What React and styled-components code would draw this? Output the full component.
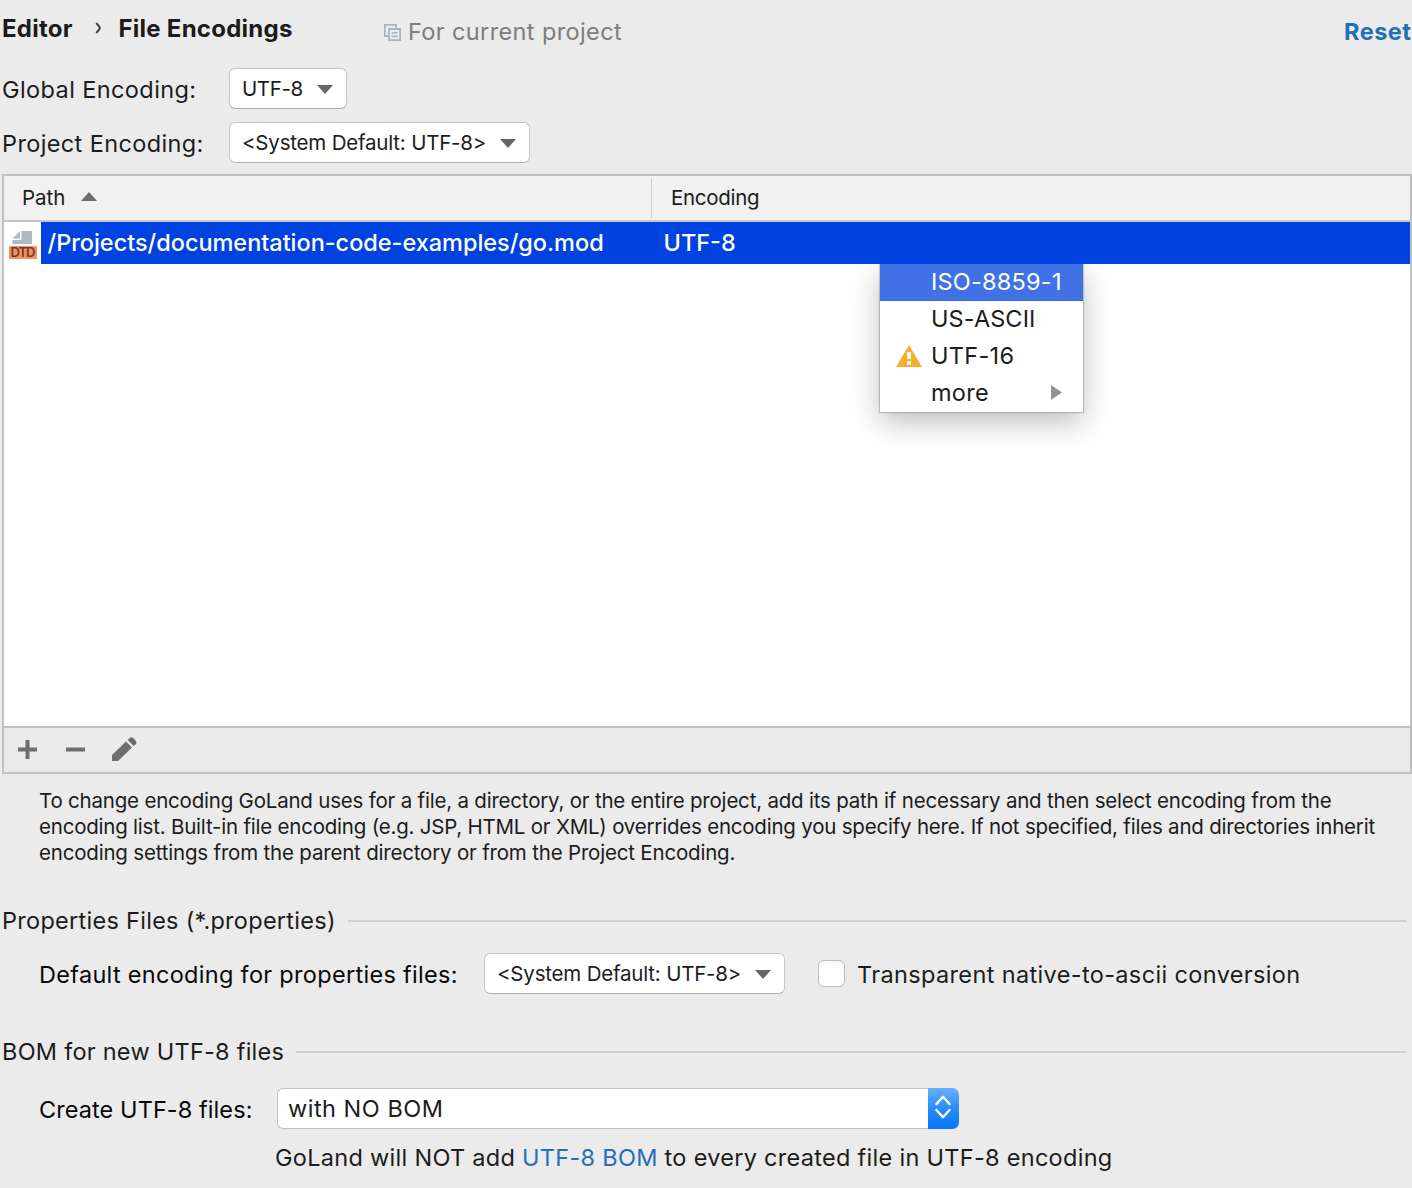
import React from "react";
import styled, { createGlobalStyle } from "styled-components";

const Global = createGlobalStyle`
  * { box-sizing: border-box; }
  body { margin: 0; background: #ebebeb; font-family: Inter, "Liberation Sans", sans-serif; }
`;

const Page = styled.main`
  width: 1412px;
  height: 1188px;
  overflow: hidden;
  display: flex;
  flex-direction: column;
  background: #ebebeb;
`;

const Text = styled.span`
  font-size: ${(p) => p.$size || 23.5}px;
  font-weight: ${(p) => p.$weight || 400};
  letter-spacing: ${(p) => p.$track || 0}px;
  color: ${(p) => p.$color || "#1c1c1c"};
  line-height: 30px;
  white-space: nowrap;
`;

const Header = styled.header`
  display: flex;
  align-items: flex-start;
  height: 68px;
  padding: 14px 0 0 2px;
`;

const Crumb = styled.div`
  display: flex;
  align-items: center;
  width: ${(p) => p.$w}px;
`;

const Scope = styled.div`
  display: flex;
  align-items: center;
  padding-top: 3px;
  gap: 7px;
  flex: 1;
`;

const ResetLink = styled.a`
  display: flex;
  padding-top: 3px;
  width: 68px;
`;

const FormRow = styled.div`
  display: flex;
  align-items: center;
  height: 41px;
  margin-bottom: ${(p) => p.$after || 0}px;
  padding-left: ${(p) => p.$left || 2}px;
`;

const Label = styled.label`
  display: flex;
  width: ${(p) => p.$w}px;
  padding-top: 2px;
`;

const Select = styled.button`
  display: flex;
  align-items: center;
  justify-content: space-between;
  width: ${(p) => p.$w}px;
  height: 41px;
  padding: 1px 13px 0 12px;
  font-family: inherit;
  background: #fff;
  border: 1px solid #c6c6c6;
  border-bottom-color: #b0b0b0;
  border-radius: 6px;
`;

const Table = styled.section`
  display: flex;
  flex-direction: column;
  height: 600px;
  margin: 11px 0 0 2px;
  border: 2px solid #c1c1c1;
  background: #fff;
`;

const TableHead = styled.div`
  display: flex;
  align-items: center;
  height: 46px;
  background: #f1f1f1;
  border-bottom: 2px solid #c6c6c6;
`;

const PathHead = styled.div`
  display: flex;
  align-items: center;
  gap: 16px;
  width: 648px;
  height: 40px;
  padding-left: 18px;
  border-right: 1px solid #cfcfcf;

  svg {
    margin-bottom: 3px;
  }
`;

const EncodingHead = styled.div`
  padding-left: 19px;
`;

const TableBody = styled.div`
  position: relative;
  flex: 1;
`;

const Row = styled.div`
  display: flex;
  height: 42px;
`;

const IconCell = styled.div`
  width: 37px;
  padding: 9px 0 0 5px;
`;

const PathCell = styled.div`
  display: flex;
  align-items: center;
  width: 611px;
  padding-left: 6.5px;
  background: #0042df;
`;

const EncodingCell = styled.div`
  display: flex;
  align-items: center;
  flex: 1;
  padding-left: 11.5px;
  background: #0042df;
`;

const Menu = styled.div`
  position: absolute;
  left: 876px;
  top: 42px;
  width: 203px;
  background: #fff;
  box-shadow: 0 0 1px 1px rgba(0, 0, 0, 0.18), 0 10px 28px rgba(0, 0, 0, 0.26);
  clip-path: inset(0 -60px -60px -60px);
`;

const MenuItem = styled.div`
  display: flex;
  align-items: center;
  height: 37px;
  padding: 0 21px 2px 0;
  background: ${(p) => (p.$active ? "#4072e6" : "transparent")};
`;

const MenuIcon = styled.span`
  display: flex;
  width: 51px;
  padding-left: 16px;
`;

const MenuText = styled(Text)`
  flex: 1;
`;

const Toolbar = styled.div`
  display: flex;
  align-items: center;
  height: 46px;
  padding: 0 0 1px 14px;
  gap: 29px;
  background: #ebebeb;
  border-top: 2px solid #c1c1c1;
`;

const PencilSlot = styled.span`
  display: flex;
  margin: 0 0 1px -2px;
`;

const Note = styled.p`
  display: flex;
  flex-direction: column;
  margin: 14px 0 0 39px;
`;

const NoteLine = styled(Text)`
  line-height: 26px;
`;

const SectionTitle = styled.h2`
  display: flex;
  align-items: center;
  gap: 12px;
  height: 30px;
  margin: ${(p) => p.$top}px 6px ${(p) => p.$bottom}px 2px;
  font-weight: 400;
`;

const Rule = styled.span`
  flex: 1;
  height: 2px;
  background: #cfcfcf;
`;

const Checkbox = styled.span`
  width: 27px;
  height: 27px;
  margin: 0 12px 0 33px;
  background: linear-gradient(#f7f7f7, #fff 35%);
  border: 1px solid #bdbdbd;
  border-radius: 6px;
`;

const CheckboxLabel = styled(Text)`
  padding-top: 2px;
`;

const Combo = styled.div`
  display: flex;
  align-items: center;
  width: 682px;
  height: 41px;
  padding-left: 10px;
  background: #fff;
  border: 1px solid #c3c3c3;
  border-right: 0;
  border-radius: 6px;
`;

const ComboValue = styled(Text)`
  flex: 1;
  padding-top: 1px;
`;

const Stepper = styled.span`
  display: flex;
  align-items: center;
  justify-content: center;
  width: 31px;
  height: 41px;
  padding: 0 1px 4px 0;
  background: linear-gradient(#66b1fc, #2a8cff 50%, #0577fb);
  border-radius: 0 7px 7px 0;
`;

const Hint = styled.div`
  padding: 14px 0 0 275px;
`;

const Down = () => (
  <svg width="16" height="9" viewBox="0 0 16 9"><path d="M0 0H16L8 9Z" fill="#666" /></svg>
);
const Up = () => (
  <svg width="16" height="9" viewBox="0 0 16 9"><path d="M0 9H16L8 0Z" fill="#6e6e6e" /></svg>
);
const CopyIcon = () => (
  <svg width="17" height="17" viewBox="0 0 17 17" fill="none" stroke="#aab4bd" strokeWidth="1.8">
    <path d="M4.5 12H.9V.9H12V4.5M5 5H16.1V16.1H5ZM7.5 8.8H13.5M7.5 12.3H13.5" />
  </svg>
);
const DtdIcon = () => (
  <svg width="28" height="29" viewBox="0 0 28 29">
    <path d="M3.5 7.5L11 0V7.5Z" fill="#aeb9c1" />
    <path d="M12.5 0H23V13H3.5V9H12.5Z" fill="#aeb9c1" />
    <path d="M0 15H28V28H0Z" fill="#f98e61" />
    <text x="14" y="26" textAnchor="middle" fontFamily="Inter, sans-serif" fontWeight="600" fontSize="13" textLength="25" fill="#6b3d2a">DTD</text>
  </svg>
);
const WarningIcon = () => (
  <svg width="26" height="22" viewBox="0 0 26 22">
    <path d="M13 0L26 22H0Z" fill="#f8ae2d" />
    <path d="M11 7H15V14H11ZM11 16.3H15V19.8H11Z" fill="#fff" />
  </svg>
);

export default function App() {
  return (
    <>
      <Global />
      <Page>
        <Header>
          <Crumb $w={91}><Text $size={24} $weight={700} $track={0.25}>Editor</Text></Crumb>
          <Crumb $w={25.5}>
            <svg width="10" height="30" viewBox="0 0 10 30" fill="none" stroke="#333" strokeWidth="1.9"><path d="M3.3 9L6.6 13.2Q7.2 14 6.6 14.8L3.3 19" /></svg>
          </Crumb>
          <Crumb $w={265.5}><Text $size={24} $weight={700} $track={0.25}>File Encodings</Text></Crumb>
          <Scope>
            <CopyIcon />
            <Text $track={0.38} $color="#7d7d7d">For current project</Text>
          </Scope>
          <ResetLink><Text $weight={700} $track={0.5} $color="#2470b8">Reset</Text></ResetLink>
        </Header>

        <FormRow $after={13}>
          <Label $w={227}><Text $track={0.4}>Global Encoding:</Text></Label>
          <Select $w={118}><Text $size={20.5} $track={-0.4}>UTF-8</Text><Down /></Select>
        </FormRow>
        <FormRow>
          <Label $w={227}><Text $track={0.37}>Project Encoding:</Text></Label>
          <Select $w={301}><Text $size={20.5} $track={-0.2}>&lt;System Default: UTF-8&gt;</Text><Down /></Select>
        </FormRow>

        <Table>
          <TableHead>
            <PathHead><Text $size={20.5}>Path</Text><Up /></PathHead>
            <EncodingHead><Text $size={20.5} $track={-0.3}>Encoding</Text></EncodingHead>
          </TableHead>
          <TableBody>
            <Row>
              <IconCell><DtdIcon /></IconCell>
              <PathCell><Text $weight={500} $track={-0.03} $color="#fff">/Projects/documentation-code-examples/go.mod</Text></PathCell>
              <EncodingCell><Text $weight={500} $color="#fff">UTF-8</Text></EncodingCell>
            </Row>
            <Menu>
              <MenuItem $active><MenuIcon /><MenuText $track={0.22} $color="#fff">ISO-8859-1</MenuText></MenuItem>
              <MenuItem><MenuIcon /><MenuText $track={0.1}>US-ASCII</MenuText></MenuItem>
              <MenuItem><MenuIcon><WarningIcon /></MenuIcon><MenuText $track={0.3}>UTF-16</MenuText></MenuItem>
              <MenuItem>
                <MenuIcon />
                <MenuText $track={0.25}>more</MenuText>
                <svg width="11" height="15" viewBox="0 0 11 15"><path d="M0 0L11 7.5L0 15Z" fill="#939393" /></svg>
              </MenuItem>
            </Menu>
          </TableBody>
          <Toolbar>
            <svg width="19" height="19" viewBox="0 0 19 19"><path d="M7.5 0H11.5V7.5H19V11.5H11.5V19H7.5V11.5H0V7.5H7.5Z" fill="#6e6e6e" /></svg>
            <svg width="19" height="19" viewBox="0 0 19 19"><path d="M0 7.5H19V11.5H0Z" fill="#6e6e6e" /></svg>
            <PencilSlot>
              <svg width="25" height="24" viewBox="0 0 25 24"><path d="M0 24V18L14 4.5L20 10.5L6 24ZM15.7 3L18 .8Q19.4-.5 20.8.8L24 4Q25 5.5 24 7L21.7 9Z" fill="#6e6e6e" /></svg>
            </PencilSlot>
          </Toolbar>
        </Table>

        <Note>
          <NoteLine $size={20.5} $track={-0.205}>To change encoding GoLand uses for a file, a directory, or the entire project, add its path if necessary and then select encoding from the</NoteLine>
          <NoteLine $size={20.5} $track={-0.213}>encoding list. Built-in file encoding (e.g. JSP, HTML or XML) overrides encoding you specify here. If not specified, files and directories inherit</NoteLine>
          <NoteLine $size={20.5} $track={-0.19}>encoding settings from the parent directory or from the Project Encoding.</NoteLine>
        </Note>

        <SectionTitle $top={40} $bottom={17}><Text $track={0.28}>Properties Files (*.properties)</Text><Rule /></SectionTitle>
        <FormRow $left={39}>
          <Label $w={445}><Text $track={0.3} $color="#080808">Default encoding for properties files:</Text></Label>
          <Select $w={301}><Text $size={20.5} $track={-0.2}>&lt;System Default: UTF-8&gt;</Text><Down /></Select>
          <Checkbox />
          <CheckboxLabel $track={0.36}>Transparent native-to-ascii conversion</CheckboxLabel>
        </FormRow>

        <SectionTitle $top={43} $bottom={21}><Text $track={0.25}>BOM for new UTF-8 files</Text><Rule /></SectionTitle>
        <FormRow $left={39}>
          <Label $w={238}><Text $track={0.08} $color="#080808">Create UTF-8 files:</Text></Label>
          <Combo>
            <ComboValue $track={0.5}>with NO BOM</ComboValue>
            <Stepper>
              <svg width="16" height="24" viewBox="0 0 16 24" fill="none" stroke="#fff" strokeWidth="2.4" strokeLinecap="round" strokeLinejoin="round"><path d="M1.5 9L8 1.8L14.5 9M1.5 15L8 22.2L14.5 15" /></svg>
            </Stepper>
          </Combo>
        </FormRow>
        <Hint><Text $track={0.29}>GoLand will NOT add <Text as="a" $track={0.29} $color="#2470b8">UTF-8 BOM</Text> to every created file in UTF-8 encoding</Text></Hint>
      </Page>
    </>
  );
}
